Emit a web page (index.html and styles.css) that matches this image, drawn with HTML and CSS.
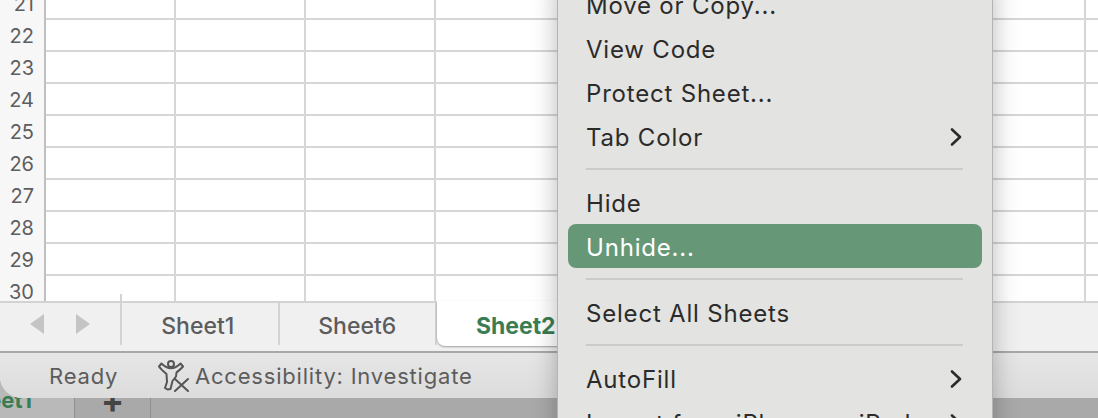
FILE: index.html

```html
<!DOCTYPE html>
<html lang="en">
<head>
<meta charset="UTF-8">
<title>Sheet tab menu</title>
<link rel="stylesheet" href="styles.css">
</head>
<body>

<div class="window">
    <div class="sheet">
        <div class="row"><div class="num">21</div><div class="cells"></div></div>
        <div class="row"><div class="num">22</div><div class="cells"></div></div>
        <div class="row"><div class="num">23</div><div class="cells"></div></div>
        <div class="row"><div class="num">24</div><div class="cells"></div></div>
        <div class="row"><div class="num">25</div><div class="cells"></div></div>
        <div class="row"><div class="num">26</div><div class="cells"></div></div>
        <div class="row"><div class="num">27</div><div class="cells"></div></div>
        <div class="row"><div class="num">28</div><div class="cells"></div></div>
        <div class="row"><div class="num">29</div><div class="cells"></div></div>
        <div class="row"><div class="num">30</div><div class="cells"></div></div>
    </div>

    <div class="tabbar">
        <div class="nav">
            <span class="arrow arrow-left"></span>
            <span class="arrow arrow-right"></span>
        </div>
        <div class="tab tab-first">Sheet1</div>
        <div class="tab">Sheet6</div>
        <div class="tab tab-active">Sheet2</div>
    </div>

    <div class="status">
        <span class="ready">Ready</span>
        <svg class="acc-icon" width="32" height="32" viewBox="0 0 32 32" fill="none" stroke="#555" stroke-width="2" stroke-linejoin="round" stroke-linecap="round">
            <circle cx="13" cy="4" r="3"/>
            <path d="M1 6.5L3.5 3.5C6 6 9 8.2 13 8.2C17 8.2 20 6 22.5 3.5L25 6.5C22.5 9.5 20 11 18.5 12.5L18 16.5L14.5 21L12.5 29L9.5 29.5L7 28L9 22L8.5 14C6 12 3 9.5 1 6.5Z"/>
            <path d="M17 19L30 31M30 19L17 31"/>
        </svg>
        <span class="acc-text">Accessibility: Investigate</span>
    </div>
</div>

<div class="behind">
    <div class="behind-tab"><span>Sheet1</span></div>
    <div class="behind-add">+</div>
</div>

<div class="menu">
    <div class="item">Move or Copy...</div>
    <div class="item">View Code</div>
    <div class="item">Protect Sheet...</div>
    <div class="item">Tab Color
        <svg class="chev" width="14" height="20" viewBox="0 0 14 20" fill="none" stroke="#2b2b2b" stroke-width="2.6" stroke-linecap="round" stroke-linejoin="round"><path d="M3 2.5L11 10L3 17.5"/></svg>
    </div>
    <div class="sep"></div>
    <div class="item">Hide</div>
    <div class="item item-on">Unhide...</div>
    <div class="sep"></div>
    <div class="item">Select All Sheets</div>
    <div class="sep"></div>
    <div class="item">AutoFill
        <svg class="chev" width="14" height="20" viewBox="0 0 14 20" fill="none" stroke="#2b2b2b" stroke-width="2.6" stroke-linecap="round" stroke-linejoin="round"><path d="M3 2.5L11 10L3 17.5"/></svg>
    </div>
    <div class="item">Import from iPhone or iPad
        <svg class="chev" width="14" height="20" viewBox="0 0 14 20" fill="none" stroke="#2b2b2b" stroke-width="2.6" stroke-linecap="round" stroke-linejoin="round"><path d="M3 2.5L11 10L3 17.5"/></svg>
    </div>
</div>

</body>
</html>
```

FILE: styles.css

```css
html, body { margin:0; height:100%; overflow:hidden; }
body { position:relative; font-family:'Inter', sans-serif; background:#a9a9a9; color:#2b2b2b; }

.window { position:relative; z-index:1; height:398px; display:flex; flex-direction:column; background:#fff; border-radius:0 0 0 22px; overflow:hidden; }

/* grid */
.sheet { height:301px; overflow:hidden; flex:none; }
.row { display:flex; height:32px; box-sizing:border-box; border-bottom:2px solid #d6d6d6; }
.row:first-child { margin-top:-12px; }
.num { width:46px; flex:none; box-sizing:border-box; padding-right:10px; text-align:right; font-size:20px; line-height:33px; color:#5e5e5e; background:#f7f7f7; border-right:2px solid #c0c0c0; margin-bottom:-2px; }
.cells { flex:1; background-image:repeating-linear-gradient(90deg, transparent 0, transparent 128px, #d6d6d6 128px, #d6d6d6 130px); }

/* tabs */
.tabbar { position:relative; height:52px; flex:none; box-sizing:border-box; display:flex; align-items:flex-start; background:#f0f0f0; border-top:2px solid #d3d3d3; border-bottom:2px solid #a8a8a8; }
.nav { position:relative; width:122px; height:42px; flex:none; display:flex; align-items:center; gap:32px; padding-left:30px; box-sizing:border-box; }
.nav::after { content:""; position:absolute; right:0; top:-9px; bottom:0; width:2px; background:#d3d3d3; }
.arrow { width:0; height:0; border-top:10px solid transparent; border-bottom:10px solid transparent; }
.arrow-left { border-right:14px solid #c4c4c4; }
.arrow-right { border-left:14px solid #c4c4c4; }
.tab { width:157.5px; height:42px; flex:none; box-sizing:border-box; text-align:center; font-size:23px; line-height:46px; font-weight:500; color:#5c5c5c; border-right:2px solid #d3d3d3; }
.tab-first { padding-right:4px; }
.tab-active { margin-top:-2px; height:45px; line-height:50px; background:#fff; color:#3b7d52; font-weight:700; border-right:none; border-radius:0 0 0 8px; box-shadow:0 1px 2px rgba(0,0,0,.35); }

/* status */
.status { flex:1; display:flex; align-items:center; padding-left:49px; font-size:22px; letter-spacing:.8px; color:#5c5c5c; background:linear-gradient(#e6e6e6, #dcdcdc); }
.ready { width:109px; flex:none; }
.acc-icon { flex:none; margin-right:5px; }

/* what shows under the window */
.behind { position:absolute; left:0; right:0; bottom:0; height:40px; display:flex; align-items:flex-end; }
.behind-tab { width:75px; height:100%; box-sizing:border-box; background:#b9b9b9; border-right:1px solid #8f8f8f; position:relative; overflow:hidden; }
.behind-tab span { position:absolute; right:42px; bottom:5px; font-size:22px; font-weight:700; color:#3b7d52; }
.behind-add { width:76px; height:100%; box-sizing:border-box; border-right:1px solid #8f8f8f; text-align:center; font-size:34px; font-weight:700; line-height:46px; color:#444; }

/* context menu */
.menu { position:absolute; z-index:2; left:557px; top:-18px; width:436px; box-sizing:border-box; display:flex; flex-direction:column; background:#e3e3e1; border:1px solid #b4b4b4; box-shadow:0 0 24px rgba(0,0,0,.28); padding:0 10px 20px; font-size:24px; letter-spacing:.8px; }
.item { height:44px; flex:none; display:flex; align-items:center; justify-content:space-between; padding:0 19px 0 18px; border-radius:8px; color:#2b2b2b; }
.item-on { background:#669878; color:#fff; margin:-1px 0 1px; padding-top:2px; box-sizing:border-box; }
.sep { height:2px; flex:none; margin:9px 19px 11px 18px; background:#cbcbc9; }
```
